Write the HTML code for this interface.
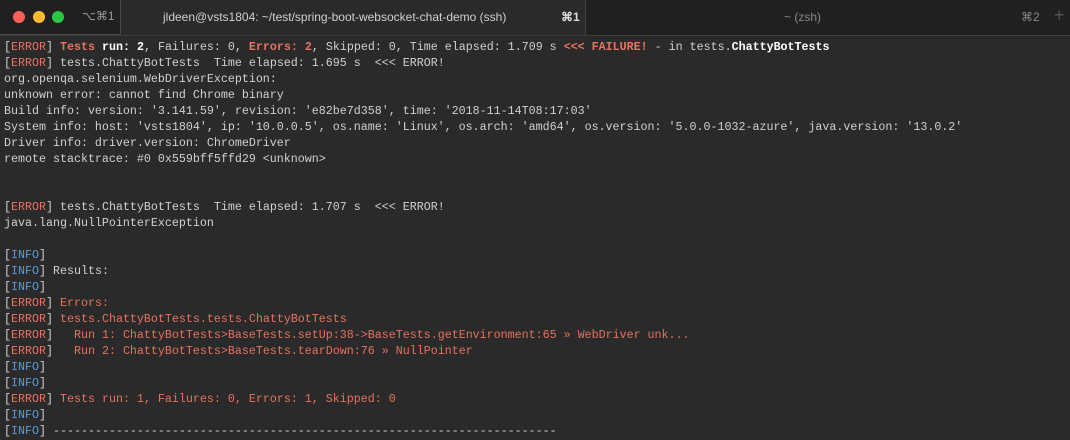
<!DOCTYPE html>
<html><head><style>
body{margin:0;width:1070px;height:440px;background:#2a2a2b;overflow:hidden;position:relative;font-family:"Liberation Mono",monospace}
.tabs{position:absolute;left:0;top:0;width:1070px;height:35px;background:#2a2a2b;border-bottom:1px solid #3a3a3a;font-family:"Liberation Sans",sans-serif;font-size:12px;color:#bdbdbd}
.lt{position:absolute;left:0;top:0;width:120px;height:34px;background:#202021;border-right:1px solid #484848;border-bottom:1px solid #484848}
.rt{position:absolute;left:585px;top:0;width:485px;height:35px;background:#202021;border-left:1px solid #3f3f3f;border-bottom:1px solid #3f3f3f}
.dot{position:absolute;top:11px;width:12px;height:12px;border-radius:50%}
pre{position:absolute;left:4px;top:39px;margin:0;font-family:"Liberation Mono",monospace;font-size:11.67px;line-height:16px;color:#d0d0d0}
.r{color:#e5735f}.b{color:#5b9bd5}.w{color:#fff;font-weight:bold}.rb{color:#e5735f;font-weight:bold}
</style></head><body>
<div class="tabs">
<div class="lt"><div class="dot" style="left:13px;background:#fe5f57"></div><div class="dot" style="left:33px;background:#febc2e"></div><div class="dot" style="left:52px;background:#28c840"></div><span style="position:absolute;left:82px;top:9px;color:#999;font-size:12px">⌥⌘1</span></div>
<span style="position:absolute;left:163px;top:10px;color:#d0d0d0">jldeen@vsts1804: ~/test/spring-boot-websocket-chat-demo (ssh)</span>
<span style="position:absolute;left:561px;top:10px;color:#ddd;font-weight:bold">⌘1</span>
<div class="rt"><span style="position:absolute;left:198px;top:10px;color:#888">~ (zsh)</span><span style="position:absolute;left:435px;top:10px;color:#888">⌘2</span><span style="position:absolute;left:468px;top:5px;color:#555;font-size:18px">+</span></div>
</div>
<pre>[<span class="r">ERROR</span>] <span class="rb">Tests</span> <span class="w">run: 2</span>, Failures: 0, <span class="rb">Errors: 2</span>, Skipped: 0, Time elapsed: 1.709 s <span class="rb">&lt;&lt;&lt; FAILURE!</span> - in tests.<span class="w">ChattyBotTests</span>
[<span class="r">ERROR</span>] tests.ChattyBotTests  Time elapsed: 1.695 s  &lt;&lt;&lt; ERROR!
org.openqa.selenium.WebDriverException:
unknown error: cannot find Chrome binary
Build info: version: '3.141.59', revision: 'e82be7d358', time: '2018-11-14T08:17:03'
System info: host: 'vsts1804', ip: '10.0.0.5', os.name: 'Linux', os.arch: 'amd64', os.version: '5.0.0-1032-azure', java.version: '13.0.2'
Driver info: driver.version: ChromeDriver
remote stacktrace: #0 0x559bff5ffd29 &lt;unknown&gt;


[<span class="r">ERROR</span>] tests.ChattyBotTests  Time elapsed: 1.707 s  &lt;&lt;&lt; ERROR!
java.lang.NullPointerException

[<span class="b">INFO</span>]
[<span class="b">INFO</span>] Results:
[<span class="b">INFO</span>]
[<span class="r">ERROR</span>] <span class="r">Errors:</span>
[<span class="r">ERROR</span>] <span class="r">tests.ChattyBotTests.tests.ChattyBotTests</span>
[<span class="r">ERROR</span>] <span class="r">  Run 1: ChattyBotTests&gt;BaseTests.setUp:38-&gt;BaseTests.getEnvironment:65 » WebDriver unk...</span>
[<span class="r">ERROR</span>] <span class="r">  Run 2: ChattyBotTests&gt;BaseTests.tearDown:76 » NullPointer</span>
[<span class="b">INFO</span>]
[<span class="b">INFO</span>]
[<span class="r">ERROR</span>] <span class="r">Tests run: 1, Failures: 0, Errors: 1, Skipped: 0</span>
[<span class="b">INFO</span>]
[<span class="b">INFO</span>] ------------------------------------------------------------------------</pre>
</body></html>
